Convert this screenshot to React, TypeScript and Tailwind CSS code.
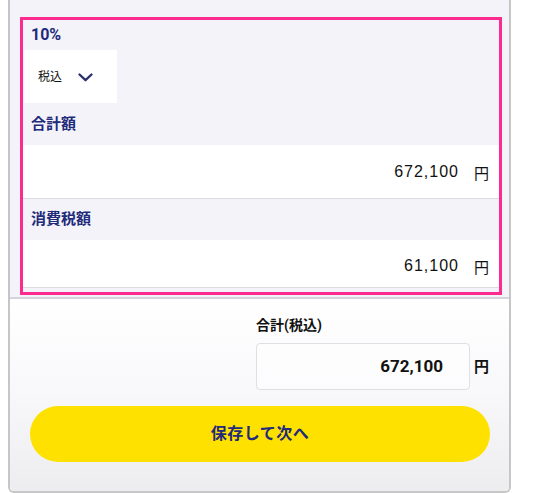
import React from "react";

const font = { fontFamily: 'Roboto, "Noto Sans CJK JP", sans-serif' };

function Chevron() {
  return (
    <svg width="15" height="9" viewBox="0 0 15 9" fill="none">
      <path d="M1.5 1.5 L7.5 7.2 L13.5 1.5" stroke="#2a2f6e" strokeWidth="2.3" strokeLinecap="round" strokeLinejoin="round" />
    </svg>
  );
}

function AmountRow({ value, h, pt }: { value: string; h: string; pt: string }) {
  return (
    <div className={`${h} ${pt} bg-white border-b border-[#dcdce0] flex items-center justify-end pr-[10px]`}>
      <span className="text-[16px] text-[#111] tracking-[1px]" style={{ fontFamily: '"Liberation Sans", Arial, sans-serif' }}>{value}</span>
      <span className="ml-[15px] text-[15px] text-[#111] mt-[5px]">円</span>
    </div>
  );
}

export default function App() {
  return (
    <div className="w-[533px] h-[493px] bg-white overflow-hidden" style={font}>
      <div className="ml-[8px] w-[503px] h-[493px] border-x-2 border-b-2 border-[#c6c6c6] rounded-b-[6px] flex flex-col overflow-hidden">
        <div className="bg-[#f3f3f9] pt-[17px] pl-[10px] pr-[7px] pb-[2px] border-b-2 border-[#d4d4dc]">
          <div className="border-[3px] border-[#fb2c8f] flex flex-col">
            <div className="h-[30px] flex items-center pl-[8px] text-[16px] font-bold text-[#222a7a]">10%</div>
            <div className="h-[53px] flex">
              <div className="ml-[1px] w-[93px] bg-white flex items-center pl-[14px]">
                <span className="text-[12px] text-[#111]">税込</span>
                <span className="ml-[16px] mt-[1px]"><Chevron /></span>
              </div>
            </div>
            <div className="h-[42px] flex items-center pl-[8px] text-[15px] font-bold text-[#222a7a]">合計額</div>
            <AmountRow value="672,100" h="h-[54px]" pt="pt-0" />
            <div className="h-[41px] flex items-center pl-[8px] text-[15px] font-bold text-[#222a7a]">消費税額</div>
            <AmountRow value="61,100" h="h-[48px]" pt="pt-[5px]" />
            <div className="h-[4px]" />
          </div>
        </div>
        <div className="flex-1 bg-gradient-to-b from-white via-[#f8f8fb] to-[#ededf0] flex flex-col">
          <div className="pl-[246px] mt-[16px] h-[20px] flex items-center text-[14px] font-bold text-[#111]">合計(税込)</div>
          <div className="pl-[246px] mt-[8px] flex items-center">
            <div className="w-[214px] h-[47px] rounded-[4px] border border-[#e0e0e4] bg-white/50 flex items-center justify-end pr-[26px]">
              <span className="text-[17px] font-bold text-[#111]">672,100</span>
            </div>
            <span className="ml-[4px] text-[15px] font-bold text-[#111] mt-[2px]">円</span>
          </div>
          <div className="mt-[16px] ml-[20px] w-[460px] h-[56px] rounded-full bg-[#ffe100] flex items-center justify-center">
            <span className="text-[16px] font-bold text-[#222a7a] tracking-[0.5px]">保存して次へ</span>
          </div>
        </div>
      </div>
    </div>
  );
}
